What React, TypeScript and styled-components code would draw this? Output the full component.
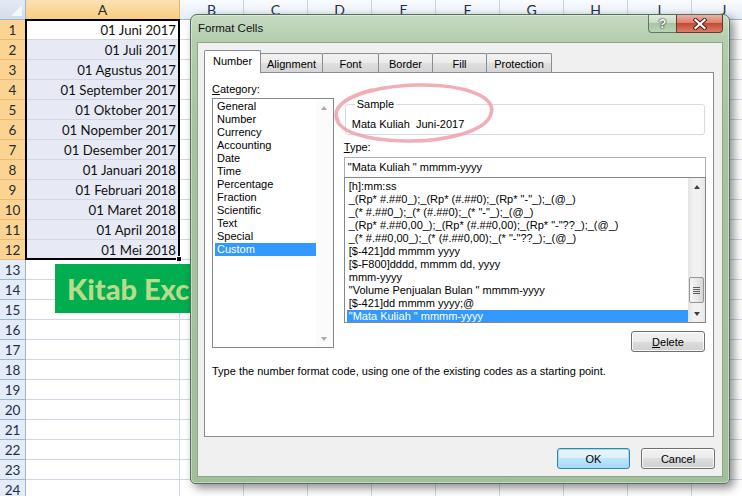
import React from "react";
import styled, { createGlobalStyle, css } from "styled-components";

const GlobalStyle = createGlobalStyle`
  html, body {
    margin: 0;
    padding: 0;
    background: #fff;
    overflow: hidden;
  }
  * {
    box-sizing: border-box;
  }
`;

const Page = styled.div`
  position: relative;
  width: 742px;
  height: 496px;
  overflow: hidden;
  font-family: Lato, "Liberation Sans", sans-serif;
`;

/* ---------- spreadsheet ---------- */

const Sheet = styled.div`
  display: grid;
  grid-template-columns: 26px 154px repeat(9, 64px);
  grid-auto-rows: 20px;
`;

const Corner = styled.div`
  position: relative;
  border-right: 1px solid #9eb6ce;
  border-bottom: 1px solid #9eb6ce;
  background: linear-gradient(#e4ebf5, #d3deec);

  &::after {
    content: "";
    position: absolute;
    right: 3px;
    bottom: 3px;
    border-style: solid;
    border-width: 0 0 11px 11px;
    border-color: transparent transparent #f4f7fb transparent;
  }
`;

const ColHead = styled.div<{ $active?: boolean }>`
  display: flex;
  align-items: center;
  justify-content: center;
  font-size: 14px;
  color: #1e2f4a;
  border-right: 1px solid #c5d2e3;
  border-bottom: 1px solid #9eb6ce;
  background: linear-gradient(#f9fbfe, #e6edf7);

  ${(p) =>
    p.$active &&
    css`
      color: #2a2a2a;
      background: linear-gradient(#fbe2b4, #f8cd82);
      border-right-color: #f2b462;
      border-bottom-color: #f29536;
    `}
`;

const RowHead = styled.div<{ $active?: boolean }>`
  display: flex;
  align-items: center;
  justify-content: center;
  padding-top: 1px;
  font-size: 13.5px;
  color: #1e2f4a;
  background: #e4ecf7;
  border-right: 1px solid #9eb6ce;
  border-bottom: 1px solid #9eb6ce;

  ${(p) =>
    p.$active &&
    css`
      color: #2a2a2a;
      background: #fbd494;
      border-right-color: #f29536;
      border-bottom-color: #f4b86a;
    `}
`;

const Cell = styled.div<{ $tone: "active" | "selected" | "plain" }>`
  display: flex;
  align-items: center;
  justify-content: flex-end;
  padding: 1px 3px 0 0;
  font-size: 13.2px;
  color: #101010;
  white-space: nowrap;
  border-right: 1px solid #d0d7e5;
  border-bottom: 1px solid #d0d7e5;
  background: ${(p) => (p.$tone === "selected" ? "#e7eaf5" : "#fff")};
`;

const Selection = styled.div`
  position: absolute;
  left: 25px;
  top: 19px;
  width: 155px;
  height: 241px;
  border: 2px solid #000;
  pointer-events: none;
`;

const FillHandle = styled.div`
  position: absolute;
  left: 176px;
  top: 256px;
  width: 6px;
  height: 6px;
  background: #000;
  border: 1px solid #fff;
`;

const Banner = styled.div`
  position: absolute;
  left: 55px;
  top: 264px;
  width: 150px;
  height: 49px;
  padding-left: 12px;
  background: #00ad4f;
  color: #b8db8c;
  font-family: Lato, "Liberation Sans", sans-serif;
  font-weight: 900;
  font-size: 29px;
  line-height: 49px;
  white-space: nowrap;
  overflow: hidden;
`;

/* ---------- dialog ---------- */

const Dialog = styled.div`
  position: absolute;
  left: 190px;
  top: 14px;
  width: 540px;
  height: 470px;
  display: flex;
  flex-direction: column;
  padding: 0 6px 6px;
  border: 1px solid #52705a;
  border-radius: 7px 7px 5px 5px;
  background: linear-gradient(180deg, #c8dbc3 0px, #b3cdad 26px, #a6c3a0 120px, #a1bf9b 100%);
  box-shadow: 4px 4px 10px rgba(0, 0, 0, 0.45), inset 0 0 0 1px rgba(255, 255, 255, 0.4);
  font-family: "Liberation Sans", Arial, sans-serif;
  font-size: 11px;
  color: #000;
`;

const TitleBar = styled.div`
  height: 27px;
  display: flex;
  align-items: flex-start;
  flex-shrink: 0;
`;

const Title = styled.div`
  padding: 6px 0 0 1px;
  font-size: 11.5px;
  line-height: 14px;
  color: #111;
`;

const CaptionButtons = styled.div`
  margin-left: auto;
  display: flex;
`;

const CaptionButton = styled.div<{ $kind: "help" | "close" }>`
  height: 18px;
  display: flex;
  align-items: center;
  justify-content: center;
  border: 1px solid #5f7863;
  border-top: none;

  ${(p) =>
    p.$kind === "help"
      ? css`
          width: 29px;
          border-radius: 0 0 0 4px;
          background: linear-gradient(#e2ece0, #c8dac4 45%, #a9c4a3 50%, #bcd2b7);
          color: #fff;
          font-weight: bold;
          font-size: 13px;
          text-shadow: 0 0 1px #2f3f31, 0 0 1px #2f3f31, 0 0 2px #2f3f31;
        `
      : css`
          width: 47px;
          margin-left: -1px;
          border-color: #6e362b;
          border-radius: 0 0 4px 0;
          background: linear-gradient(#eab0a4, #dc8272 45%, #c44a30 50%, #d7806a);
        `}
`;

const Client = styled.div`
  flex: 1;
  display: flex;
  flex-direction: column;
  padding: 7px 8px 0 6px;
  background: #f0f0f0;
  border: 1px solid #8ea58a;
`;

const TabStrip = styled.div`
  display: flex;
  align-items: flex-end;
  height: 23px;
  margin-bottom: -1px;
  position: relative;
  z-index: 1;
`;

const Tab = styled.div<{ $w: number; $active?: boolean }>`
  width: ${(p) => p.$w}px;
  height: 19px;
  margin-bottom: 1px;
  margin-left: -1px;
  display: flex;
  align-items: center;
  justify-content: center;
  padding-top: 1px;
  font-size: 11px;
  border: 1px solid #898c95;
  border-bottom: none;
  border-radius: 2px 2px 0 0;
  background: linear-gradient(#f3f3f3, #ebebeb 50%, #dfdfdf 50%, #d5d5d5);

  &:first-child {
    margin-left: 0;
  }

  ${(p) =>
    p.$active &&
    css`
      height: 23px;
      margin-bottom: 0;
      padding-top: 0;
      padding-bottom: 2px;
      background: #fff;
      position: relative;
      z-index: 2;
    `}
`;

const Panel = styled.div`
  height: 365px;
  display: flex;
  flex-direction: column;
  padding: 10px 7px 0;
  background: #fff;
  border: 1px solid #898c95;
`;

const TopRow = styled.div`
  display: flex;
  gap: 10px;
`;

const Column = styled.div<{ $w: number }>`
  width: ${(p) => p.$w}px;
  display: flex;
  flex-direction: column;
`;

const Label = styled.div`
  line-height: 13px;
  height: 15px;
  white-space: pre;
`;

const ListBox = styled.div<{ $h: number }>`
  height: ${(p) => p.$h}px;
  display: flex;
  border: 1px solid #828790;
  background: #fff;
`;

const ListItems = styled.div<{ $pt: number }>`
  flex: 1;
  padding: ${(p) => p.$pt}px 0 0 1px;
  overflow: hidden;
`;

const ListItem = styled.div<{ $selected?: boolean }>`
  height: 13px;
  line-height: 13px;
  padding-left: 2px;
  margin-left: 1px;
  white-space: pre;
  ${(p) =>
    p.$selected &&
    css`
      background: #3399ff;
      color: #fff;
    `}
`;

const ScrollBar = styled.div<{ $disabled?: boolean }>`
  width: 17px;
  display: flex;
  flex-direction: column;
  background: ${(p) => (p.$disabled ? "#fbfbfb" : "linear-gradient(90deg, #e3e3e3, #f1f1f1 30%, #f1f1f1 70%, #e6e6e6)")};
`;

const ArrowBox = styled.div`
  height: 17px;
  display: flex;
  align-items: center;
  justify-content: center;
`;

const Arrow = styled.span<{ $dir: "up" | "down"; $disabled?: boolean }>`
  width: 0;
  height: 0;
  border-left: 3.5px solid transparent;
  border-right: 3.5px solid transparent;
  ${(p) =>
    p.$dir === "up"
      ? css`border-bottom: 4px solid ${p.$disabled ? "#a9a9a9" : "#404040"};`
      : css`border-top: 4px solid ${p.$disabled ? "#a9a9a9" : "#404040"};`}
`;

const Spacer = styled.div`
  flex: 1;
`;

const Thumb = styled.div`
  height: 26px;
  margin: 0 1px 2px;
  display: flex;
  align-items: center;
  justify-content: center;
  border: 1px solid #959595;
  border-radius: 2px;
  background: linear-gradient(90deg, #f6f6f6, #e8e8e8 50%, #d6d6d6);
`;

const Grip = styled.span`
  width: 7px;
  height: 7px;
  background: repeating-linear-gradient(#5d5d5d 0 1px, transparent 1px 2px);
`;

const Group = styled.fieldset`
  margin: 15px 1px 0;
  padding: 7px 0 3px 6px;
  border: 1px solid #d5dde3;
  border-radius: 3px;
  min-inline-size: 0;
  line-height: 13px;
  white-space: pre;
`;

const Legend = styled.legend`
  margin-left: 3px;
  padding: 0 2px;
  line-height: 13px;
`;

const TypeLabel = styled(Label)`
  margin-top: 6px;
  height: 16px;
`;

const Input = styled.div`
  height: 20px;
  padding: 2px 0 0 3px;
  line-height: 14px;
  border: 1px solid #abadb3;
  border-bottom: none;
  white-space: pre;
`;

const Button = styled.div<{ $w: number; $default?: boolean }>`
  width: ${(p) => p.$w}px;
  height: 21px;
  display: flex;
  align-items: center;
  justify-content: center;
  font-size: 11px;
  border: 1px solid #707070;
  border-radius: 3px;
  background: linear-gradient(#f2f2f2, #ebebeb 50%, #dddddd 50%, #cfcfcf);
  box-shadow: inset 0 0 0 1px rgba(255, 255, 255, 0.8);

  ${(p) =>
    p.$default &&
    css`
      border-color: #3c7fb1;
      box-shadow: inset 0 0 0 1px #94e0f8;
      background: linear-gradient(#eaf6fd, #d9f0fc 50%, #bee6fd 50%, #a7d9f5);
    `}
`;

const DeleteButton = styled(Button)`
  margin-top: 8px;
  align-self: flex-end;
  margin-right: 1px;
`;

const Hint = styled.div`
  margin-top: 13px;
  line-height: 13px;
`;

const ButtonRow = styled.div`
  display: flex;
  justify-content: flex-end;
  gap: 11px;
  margin: 11px -1px 0 0;
`;

const Scribble = styled.svg`
  position: absolute;
  left: 0;
  top: 0;
  pointer-events: none;
`;

const dates = [
  "01 Juni 2017",
  "01 Juli 2017",
  "01 Agustus 2017",
  "01 September 2017",
  "01 Oktober 2017",
  "01 Nopember 2017",
  "01 Desember 2017",
  "01 Januari 2018",
  "01 Februari 2018",
  "01 Maret 2018",
  "01 April 2018",
  "01 Mei 2018",
];

const columns = ["A", "B", "C", "D", "E", "F", "G", "H", "I", "J"];

const tabs = [
  { label: "Number", w: 57 },
  { label: "Alignment", w: 63 },
  { label: "Font", w: 57 },
  { label: "Border", w: 55 },
  { label: "Fill", w: 55 },
  { label: "Protection", w: 66 },
];

const categories = [
  "General",
  "Number",
  "Currency",
  "Accounting",
  "Date",
  "Time",
  "Percentage",
  "Fraction",
  "Scientific",
  "Text",
  "Special",
  "Custom",
];

const formats = [
  "[h]:mm:ss",
  '_(Rp* #.##0_);_(Rp* (#.##0);_(Rp* "-"_);_(@_)',
  '_(* #.##0_);_(* (#.##0);_(* "-"_);_(@_)',
  '_(Rp* #.##0,00_);_(Rp* (#.##0,00);_(Rp* "-"??_);_(@_)',
  '_(* #.##0,00_);_(* (#.##0,00);_(* "-"??_);_(@_)',
  "[$-421]dd mmmm yyyy",
  "[$-F800]dddd, mmmm dd, yyyy",
  "mmm-yyyy",
  '"Volume Penjualan Bulan " mmmm-yyyy',
  "[$-421]dd mmmm yyyy;@",
  '"Mata Kuliah " mmmm-yyyy',
];

const CloseGlyph = () => (
  <svg width="14" height="12" viewBox="0 0 14 12">
    <path d="M2.5 2 L11.5 10 M11.5 2 L2.5 10" stroke="#4b1f17" strokeWidth="4.2" strokeLinecap="square" />
    <path d="M2.5 2 L11.5 10 M11.5 2 L2.5 10" stroke="#fff" strokeWidth="2.2" strokeLinecap="square" />
  </svg>
);

export default function App() {
  return (
    <Page>
      <GlobalStyle />
      <Sheet>
        <Corner />
        {columns.map((c) => (
          <ColHead key={c} $active={c === "A"}>
            {c}
          </ColHead>
        ))}
        {Array.from({ length: 24 }, (_, i) => {
          const row = i + 1;
          return (
            <React.Fragment key={row}>
              <RowHead $active={row <= 12}>{row}</RowHead>
              <Cell $tone={row === 1 ? "active" : row <= 12 ? "selected" : "plain"}>{dates[i] ?? ""}</Cell>
              {columns.slice(1).map((c) => (
                <Cell key={c} $tone="plain" />
              ))}
            </React.Fragment>
          );
        })}
      </Sheet>
      <Selection />
      <FillHandle />
      <Banner>Kitab Excel</Banner>

      <Dialog>
        <TitleBar>
          <Title>Format Cells</Title>
          <CaptionButtons>
            <CaptionButton $kind="help">?</CaptionButton>
            <CaptionButton $kind="close">
              <CloseGlyph />
            </CaptionButton>
          </CaptionButtons>
        </TitleBar>
        <Client>
          <TabStrip>
            {tabs.map((t, i) => (
              <Tab key={t.label} $w={t.w} $active={i === 0}>
                {t.label}
              </Tab>
            ))}
          </TabStrip>
          <Panel>
            <TopRow>
              <Column $w={122}>
                <Label>
                  <u>C</u>ategory:
                </Label>
                <ListBox $h={250}>
                  <ListItems $pt={1}>
                    {categories.map((c) => (
                      <ListItem key={c} $selected={c === "Custom"}>
                        {c}
                      </ListItem>
                    ))}
                  </ListItems>
                  <ScrollBar $disabled>
                    <ArrowBox>
                      <Arrow $dir="up" $disabled />
                    </ArrowBox>
                    <Spacer />
                    <ArrowBox>
                      <Arrow $dir="down" $disabled />
                    </ArrowBox>
                  </ScrollBar>
                </ListBox>
              </Column>
              <Column $w={363}>
                <Group>
                  <Legend>Sample</Legend>
                  Mata Kuliah  Juni-2017
                </Group>
                <TypeLabel>
                  <u>T</u>ype:
                </TypeLabel>
                <Input>"Mata Kuliah " mmmm-yyyy</Input>
                <ListBox $h={146}>
                  <ListItems $pt={2}>
                    {formats.map((f, i) => (
                      <ListItem key={f} $selected={i === formats.length - 1}>
                        {f}
                      </ListItem>
                    ))}
                  </ListItems>
                  <ScrollBar>
                    <ArrowBox>
                      <Arrow $dir="up" />
                    </ArrowBox>
                    <Spacer />
                    <Thumb>
                      <Grip />
                    </Thumb>
                    <ArrowBox>
                      <Arrow $dir="down" />
                    </ArrowBox>
                  </ScrollBar>
                </ListBox>
                <DeleteButton $w={74}>
                  <u>D</u>elete
                </DeleteButton>
              </Column>
            </TopRow>
            <Hint>Type the number format code, using one of the existing codes as a starting point.</Hint>
          </Panel>
          <ButtonRow>
            <Button $w={73} $default>
              OK
            </Button>
            <Button $w={74}>Cancel</Button>
          </ButtonRow>
        </Client>
      </Dialog>

      <Scribble width="742" height="496" viewBox="0 0 742 496">
        <path
          d="M338 121 C326 100, 372 86, 418 85 C462 84, 497 96, 491 114 C486 131, 446 142, 404 141 C366 140, 337 132, 336 116 C335 104, 352 95, 372 90"
          fill="none"
          stroke="#ee9aa4"
          strokeOpacity="0.8"
          strokeWidth="3.6"
          strokeLinecap="round"
        />
      </Scribble>
    </Page>
  );
}
